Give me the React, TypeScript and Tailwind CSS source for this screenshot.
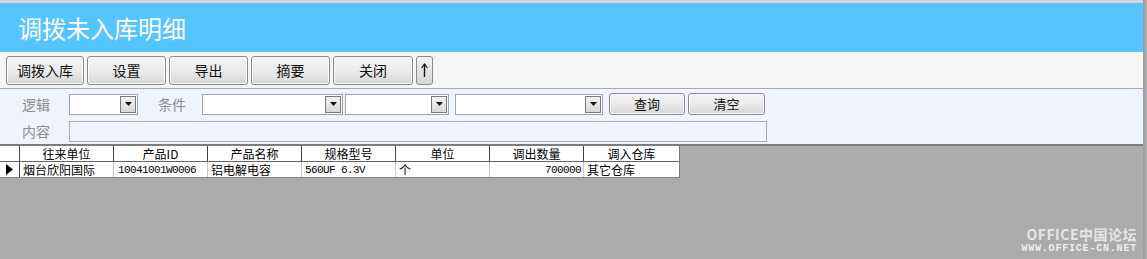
import React from "react";

const cjk = { fontFamily: '"Noto Sans CJK SC", "Microsoft YaHei", sans-serif' };
const mono = { fontFamily: '"Liberation Mono", "Noto Sans CJK SC", monospace' };

const toolButtons = [
  { label: "调拨入库", w: "w-[78px]" },
  { label: "设置", w: "w-[79px]" },
  { label: "导出", w: "w-[79px]" },
  { label: "摘要", w: "w-[79px]" },
  { label: "关闭", w: "w-[80px]" },
];

const columns = ["往来单位", "产品ID", "产品名称", "规格型号", "单位", "调出数量", "调入仓库"];

const Btn = ({ label, className }: { label: string; className: string }) => (
  <div
    className={`flex items-center justify-center rounded-[3px] border border-[#8a8a8a] bg-gradient-to-b from-[#f4f4f4] via-[#ebebeb] to-[#d6d6d6] text-[#111] shadow-[inset_0_0_0_1px_#fbfbfb] ${className}`}
    style={cjk}
  >
    {label}
  </div>
);

const Combo = ({ w }: { w: string }) => (
  <div className={`flex h-[21px] items-stretch border border-[#a3a3a3] bg-white ${w}`}>
    <div className="flex-1" />
    <div className="m-[1px] flex w-[16px] items-center justify-center border border-[#7a7a7a] bg-gradient-to-b from-[#f3f3f3] to-[#d9d9d9]">
      <svg width="7" height="4" viewBox="0 0 7 4">
        <path d="M0 0H7L3.5 4Z" fill="#111" />
      </svg>
    </div>
  </div>
);

export default function App() {
  return (
    <div className="flex h-[259px] w-[1147px] flex-col overflow-hidden bg-[#ababab]">
      <div className="flex h-full w-[1145px] flex-col border-r-2 border-[#9c9c9c]">
        <div className="h-[3px] shrink-0 bg-[#d6d6d6]" />
        <div className="flex h-[49px] shrink-0 items-center bg-[#55c4ff] pl-[18px]">
          <span className="text-[24px] leading-none text-white" style={cjk}>
            调拨未入库明细
          </span>
        </div>
        <div className="flex h-[37px] shrink-0 items-center gap-[3px] border-b border-[#a6a9b2] bg-[#f5f5f5] pl-[6px] pt-[1px]">
          {toolButtons.map((b) => (
            <Btn key={b.label} label={b.label} className={`h-[29px] text-[14px] ${b.w}`} />
          ))}
          <div className="flex h-[29px] w-[17px] items-center justify-center rounded-[3px] border border-[#8a8a8a] bg-gradient-to-b from-[#f4f4f4] to-[#d6d6d6]">
            <svg width="7" height="15" viewBox="0 0 7 15">
              <path d="M3.5 1V14" stroke="#111" strokeWidth="1.4" />
              <path d="M0.5 5L3.5 1L6.5 5" stroke="#111" strokeWidth="1.2" fill="none" />
            </svg>
          </div>
        </div>
        <div className="flex h-[57px] shrink-0 flex-col gap-[6px] border-b-2 border-[#7d7d7d] bg-[#eef3fd] pt-[4px]">
          <div className="flex items-center">
            <span className="w-[69px] pl-[22px] text-[14px] text-[#8c8c8c]" style={cjk}>
              逻辑
            </span>
            <Combo w="w-[69px]" />
            <span className="w-[64px] pl-[20px] text-[14px] text-[#8c8c8c]" style={cjk}>
              条件
            </span>
            <Combo w="w-[141px]" />
            <div className="w-[2px]" />
            <Combo w="w-[104px]" />
            <div className="w-[6px]" />
            <Combo w="w-[148px]" />
            <div className="w-[6px]" />
            <Btn label="查询" className="h-[22px] w-[76px] text-[13px]" />
            <div className="w-[3px]" />
            <Btn label="清空" className="h-[22px] w-[77px] text-[13px]" />
          </div>
          <div className="flex items-center">
            <span className="w-[69px] pl-[22px] text-[14px] text-[#8c8c8c]" style={cjk}>
              内容
            </span>
            <div className="h-[21px] w-[698px] border border-[#a9a9a9] bg-[#eef3fd]" />
          </div>
        </div>
        <div className="w-[680px] border-r border-[#7a7a7a] bg-white text-[12px] leading-[14px] text-black" style={cjk}>
          <div className="flex h-[16px] border-b border-[#666]">
            <div className="w-[20px] border-r border-[#444]" />
            {columns.map((c) => (
              <div key={c} className="flex w-[94px] items-center justify-center border-r border-[#444] last:w-[95px] last:border-r-0">
                {c}
              </div>
            ))}
          </div>
          <div className="flex h-[16px] border-b border-[#888]">
            <div className="flex w-[20px] items-center justify-center border-r border-[#444]">
              <svg width="7" height="11" viewBox="0 0 7 11">
                <path d="M0 0L7 5.5L0 11Z" fill="#000" />
              </svg>
            </div>
            <div className="flex w-[94px] items-center border-r border-[#c8c8c8] pl-[3px]">烟台欣阳国际</div>
            <div className="flex w-[94px] items-center border-r border-[#c8c8c8] pl-[4px] text-[11px] tracking-[-0.6px]" style={mono}>
              10041001W0006
            </div>
            <div className="flex w-[94px] items-center border-r border-[#c8c8c8] pl-[3px]">铝电解电容</div>
            <div className="flex w-[94px] items-center border-r border-[#c8c8c8] pl-[3px] text-[11px] tracking-[-0.6px]" style={mono}>
              560UF 6.3V
            </div>
            <div className="flex w-[94px] items-center border-r border-[#c8c8c8] pl-[3px]">个</div>
            <div className="flex w-[94px] items-center justify-end border-r border-[#c8c8c8] pr-[2px] text-[11px] tracking-[-0.6px]" style={mono}>
              700000
            </div>
            <div className="flex w-[95px] items-center pl-[3px]">其它仓库</div>
          </div>
        </div>
        <div className="flex flex-1 flex-col items-end justify-end pb-[5px] pr-[6px]">
          <span className="text-[14px] font-bold leading-none tracking-[0.5px] text-[#e6e6e6]" style={cjk}>
            OFFICE中国论坛
          </span>
          <span className="mt-[3px] text-[10px] font-bold leading-none tracking-[0.8px] text-[#efefef]" style={mono}>
            WWW.OFFICE-CN.NET
          </span>
        </div>
      </div>
    </div>
  );
}
